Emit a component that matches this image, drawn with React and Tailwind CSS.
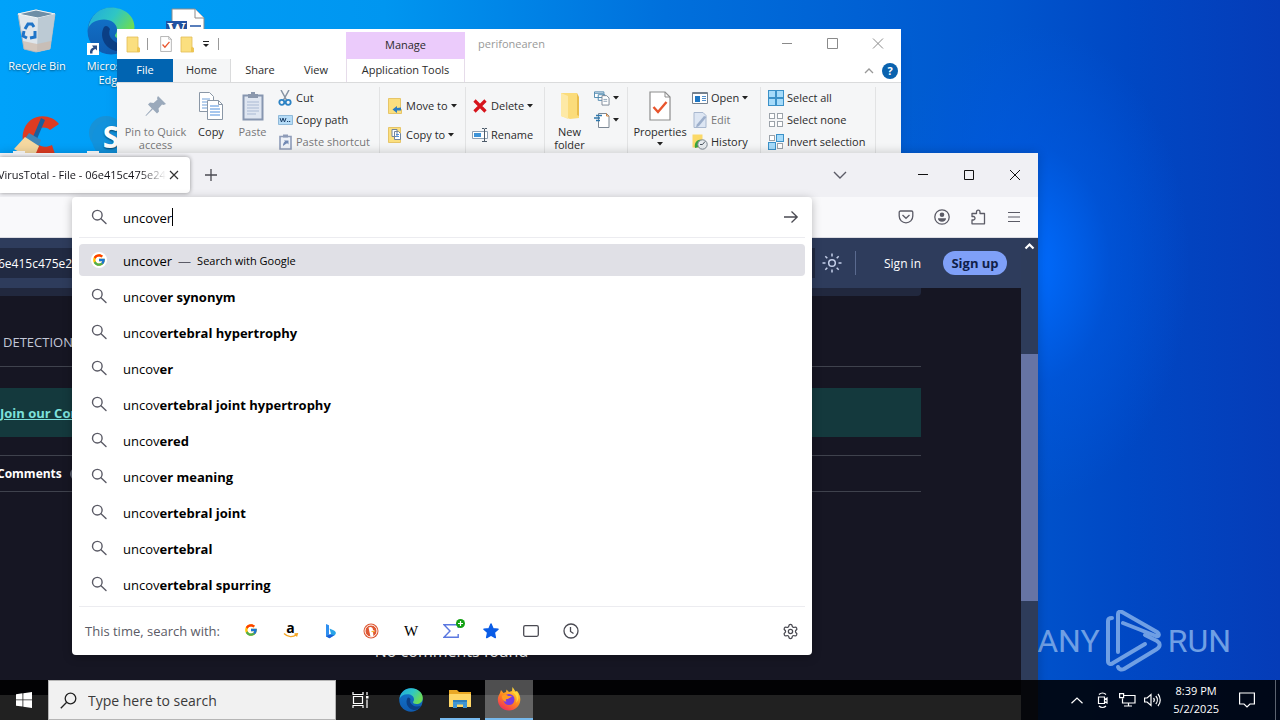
import { FcGoogle } from "react-icons/fc";
import { Settings } from "lucide-react";

const suggestions = [
  ["uncov", "er synonym"],
  ["uncov", "ertebral hypertrophy"],
  ["uncov", "er"],
  ["uncov", "ertebral joint hypertrophy"],
  ["uncov", "ered"],
  ["uncov", "er meaning"],
  ["uncov", "ertebral joint"],
  ["uncov", "ertebral"],
  ["uncov", "ertebral spurring"],
];

/* ---------- ICONS ---------- */

function SearchIcon() {
  return (
    <svg width="16" height="16" viewBox="0 0 16 16" fill="none" stroke="#5b5b66" strokeWidth="1.4" className="shrink-0">
      <circle cx="6.3" cy="6.2" r="4.8" />
      <path d="M10 9.8l5 4.7" strokeLinecap="round" />
    </svg>
  );
}

function FolderIcon() {
  return (
    <svg width="14" height="17" viewBox="0 0 14 17">
      <path d="M1 1h11v10l1.500 1v4H1z" fill="#fbdf7f" stroke="#e3bd55" strokeWidth=".8" />
      <path d="M11 16v-5l2.500 1v4z" fill="#eec54f" />
    </svg>
  );
}

function CheckDoc({ width, height }) {
  return (
    <svg width={width} height={height} viewBox="0 0 22 30" fill="none">
      <path d="M1 1h15l5 5v23H1z" fill="#fff" stroke="#8d8d8d" strokeWidth="1.200" />
      <path d="M16 1v5h5" stroke="#8d8d8d" />
      <path d="M4.500 16l4.500 5 8.500-10" stroke="#e8552d" strokeWidth="2.400" />
    </svg>
  );
}

function Arrow() {
  return (
    <svg width="6" height="4" viewBox="0 0 6 4" className="shrink-0">
      <path d="M0 0h6L3 3.500z" fill="#222" />
    </svg>
  );
}

function PinIcon() {
  return (
    <svg width="24" height="24" viewBox="0 0 24 24" fill="#9aa9bb">
      <path d="M14 2l8 8-2.500 1-1.500-.5-3.500 4 .5 3-2 2-4.200-4.200L2 22l-.5-.5 6.300-7L4 10.500l2-2 3.500.5L13.500 5.500 13 4z" />
    </svg>
  );
}

function CopyIcon() {
  return (
    <svg width="26" height="30" viewBox="0 0 26 30" fill="#fff" stroke="#8a97a6">
      <path d="M1.500 1.500h10l4 4v15h-14z" />
      <path d="M4 8h8M4 11h8M4 14h5M4 17h5" stroke="#6f9fd8" />
      <path d="M9.500 9.500h11l4 4v15h-15z" />
      <path d="M20.500 9.500v4h4" fill="none" />
      <path d="M12 15h9M12 18h10M12 21h10M12 24h10" stroke="#4f8fdc" />
    </svg>
  );
}

function PasteIcon() {
  return (
    <svg width="22" height="30" viewBox="0 0 22 30">
      <path d="M1.500 4.500h19v24h-19z" fill="#dfe6f1" stroke="#8796b0" strokeWidth="2" />
      <path d="M6 3h3V1h4v2h3v4H6z" fill="#8b98ad" />
      <path d="M5 11h12M5 14h12M5 17h12M5 20h12M5 23h9" stroke="#a9b9d3" />
    </svg>
  );
}

function CutIcon() {
  return (
    <svg width="14" height="16" viewBox="0 0 14 16" fill="none">
      <path d="M3 0l5.500 10M11 0L5.500 10" stroke="#8593a3" strokeWidth="1.500" />
      <circle cx="3.800" cy="12.300" r="2.500" stroke="#2d83c4" strokeWidth="1.800" />
      <circle cx="10.200" cy="12.300" r="2.500" stroke="#2d83c4" strokeWidth="1.800" />
    </svg>
  );
}

function CopyPathIcon() {
  return (
    <svg width="15" height="10" viewBox="0 0 15 10">
      <path d="M.5.500h14v9H.5z" fill="#b6dcf7" stroke="#8fb9d9" />
      <path d="M2 3l1.500 4L5 3l1.500 4L8 3M9 6.500h1.200M11 6.500h1.200" stroke="#1c3f68" fill="none" />
    </svg>
  );
}

function PasteShortcutIcon() {
  return (
    <svg width="13" height="16" viewBox="0 0 13 16">
      <path d="M1 2.500h11v12.500H1z" fill="#eef2f8" stroke="#8e9cb8" strokeWidth="1.600" />
      <path d="M4 .5h5v3H4z" fill="#8e9cb8" />
      <path d="M4 12c0-2 .5-3.500 2-4.500L5 6.500h4.500v4L8.300 9.300C6.500 10 5.500 11 4 12z" fill="#7189b4" />
    </svg>
  );
}

function MoveToIcon() {
  return (
    <svg width="14" height="16" viewBox="0 0 14 16">
      <path d="M.5.500h12v10l1 1v4H.5z" fill="#fbdf7f" stroke="#e6c568" />
      <path d="M13 9.500v3H9v2.500L4.500 11.500 9 8v2z" fill="#2c7cc1" />
    </svg>
  );
}

function CopyToIcon() {
  return (
    <svg width="14" height="16" viewBox="0 0 14 16">
      <path d="M.5.500h12v15H.5z" fill="#fbdf7f" stroke="#e6c568" />
      <path d="M4 2.500h5v7H4zM6.500 4.500h4l2 2v6h-6z" fill="#fff" stroke="#72849c" />
      <path d="M8 7.500h3M8 9.500h3" stroke="#4f8fdc" />
    </svg>
  );
}

function DeleteIcon() {
  return (
    <svg width="14" height="14" viewBox="0 0 14 14">
      <path d="M1.500 1.500l11 11M12.500 1.500l-11 11" stroke="#d6141c" strokeWidth="3.200" />
    </svg>
  );
}

function RenameIcon() {
  return (
    <svg width="16" height="14" viewBox="0 0 16 14" fill="none">
      <path d="M.5 3.500h15v7H.5z" fill="#fff" stroke="#8ea0b3" />
      <path d="M2 5h7v4H2z" fill="#3d93d8" />
      <path d="M12.500 1v12M10 .5h2l.5.500.5-.5h2M10 13.500h5" stroke="#4d5b6a" />
    </svg>
  );
}

function NewFolderIcon() {
  return (
    <svg width="20" height="28" viewBox="0 0 20 28">
      <path d="M1 1h16v20l2 1v4l-9 1-9-3z" fill="#fbdc7b" />
      <path d="M1 1l7 3v23l-7-3z" fill="#fde9a6" />
      <path d="M17 1v22l2 1V5z" fill="#e9bd4d" />
    </svg>
  );
}

function NewItemIcon() {
  return (
    <svg width="17" height="16" viewBox="0 0 17 16" fill="#fff">
      <path d="M.5 1.500h10v6H.5zM4.500 4.500h7v6h-7z" stroke="#4c86ad" />
      <path d="M1 3h9" stroke="#4c86ad" />
      <path d="M8.500 5.500h5l2.500 2.500v7.500H8.500z" stroke="#7c8895" />
      <path d="M10 9.500h4M10 11.500h4" stroke="#8fa2b5" />
    </svg>
  );
}

function EasyAccessIcon() {
  return (
    <svg width="16" height="16" viewBox="0 0 16 16" fill="none">
      <path d="M4.500 1.500h8l2.500 2.500v11.500H4.500z" fill="#fff" stroke="#7c8895" />
      <path d="M12.500 1.500V4H15" stroke="#d58338" />
      <path d="M2 3.500h6M0 6h6M2 8.500h4" stroke="#2e77ac" strokeWidth="1.300" />
    </svg>
  );
}

function OpenIcon() {
  return (
    <svg width="16" height="12" viewBox="0 0 16 12">
      <path d="M.5.500h15v11H.5z" fill="#fff" stroke="#75818e" />
      <path d="M1 1.500h14" stroke="#75818e" />
      <path d="M3 4h5v6H3z" fill="#1f77c4" />
      <path d="M10 4.500h4M10 6.500h4M10 8.500h4" stroke="#4f8fcc" />
    </svg>
  );
}

function EditIcon() {
  return (
    <svg width="14" height="16" viewBox="0 0 14 16">
      <path d="M1 .5h9l3 3v12H1z" fill="#dde6f3" stroke="#a9b8cf" />
      <path d="M13.500 5L6 14l-3 1.500.8-3L11 4z" fill="#9dafcb" />
    </svg>
  );
}

function HistoryIcon() {
  return (
    <svg width="16" height="16" viewBox="0 0 16 16" fill="none">
      <path d="M.5.500h10v13H.5z" fill="#fbd968" />
      <path d="M3 14c-1-5 2-9 6-8l-1 3c-3 0-2 3-1 4z" fill="#38a53c" />
      <circle cx="10.500" cy="10.500" r="4.700" fill="#e7ebee" stroke="#7a858f" />
      <path d="M10.500 10.500l2.500-3M10.500 10.500H8" stroke="#4c5660" />
    </svg>
  );
}

function TilesIcon({ fills }) {
  const spots = [[0.5, 0.5], [8.5, 0.5], [0.5, 8.5], [8.5, 8.5]];
  return (
    <svg width="16" height="16" viewBox="0 0 16 16">
      {spots.map(([x, y], i) => (
        <rect
          key={i}
          x={fills[i] ? x : x + 1}
          y={fills[i] ? y : y + 1}
          width={fills[i] ? 7 : 5}
          height={fills[i] ? 7 : 5}
          fill={fills[i] ? "#a6dbfa" : "#fff"}
          stroke={fills[i] ? "#3b91c8" : "#9ba2a9"}
        />
      ))}
    </svg>
  );
}

function EdgeIcon({ size, id }) {
  return (
    <svg width={size} height={size} viewBox="0 0 48 48" className="shrink-0">
      <defs>
        <linearGradient id={id + "a"} x1="0" y1="0" x2="1" y2=".5">
          <stop offset="0" stopColor="#1fa8e0" />
          <stop offset=".55" stopColor="#2fc6c4" />
          <stop offset="1" stopColor="#6bdc56" />
        </linearGradient>
        <linearGradient id={id + "b"} x1="0" y1="0" x2="0" y2="1">
          <stop offset="0" stopColor="#1276cc" />
          <stop offset="1" stopColor="#0f5bb0" />
        </linearGradient>
      </defs>
      <circle cx="24" cy="24" r="23.500" fill={"url(#" + id + "b)"} />
      <path d="M1 22C3 8 13 .5 24 .5c14 0 23.500 9 23.500 19.500 0 8-6 12-12.500 12-5 0-7-2-7-3.500s2-2 2-6c0-6-6-10-13-10C9 12.500 3 16 1 22z" fill={"url(#" + id + "a)"} />
      <path d="M17 20c-5 9 0 21 12 24 6 1 13-3 16-9-5 3-13 3-18-1-4-3-6-7-4-12-2-3-4-4-6-2z" fill="#0b3f85" />
    </svg>
  );
}

function FirefoxIcon() {
  return (
    <svg width="24" height="24" viewBox="0 0 24 24">
      <defs>
        <linearGradient id="fx" x1=".8" y1="0" x2=".2" y2="1">
          <stop offset="0" stopColor="#ffe43d" />
          <stop offset=".5" stopColor="#ff8a1e" />
          <stop offset="1" stopColor="#f2265e" />
        </linearGradient>
      </defs>
      <path d="M3 6l1-3 2.500 3L9 5l.5-2.500L12 5l3-1 .5-4 3 4.500L20 4c2.500 3 3.500 6 3.300 9C23 19 18 23.500 12 23.500S.8 19 .8 12.500C.8 10 2 8 3 6z" fill="url(#fx)" />
      <circle cx="12" cy="12.500" r="5.500" fill="#7a3be0" />
      <path d="M5 9c2-2 5-1 6 0h4c-1 2-3 1.500-4 3-2-.5-3 1-1.500 2.500C7 15 4.500 12 5 9z" fill="#ff9a22" />
      <path d="M15 5c4 2 6 6 4 11 3-3 3-7 1-11z" fill="#ffd93b" />
    </svg>
  );
}

function FileExplorerIcon() {
  return (
    <svg width="22" height="20" viewBox="0 0 22 20">
      <path d="M0 1h8l2 2h12v15H0z" fill="#e9a825" />
      <path d="M0 5h22v13H0z" fill="#ffd766" />
      <path d="M4 19v-8h14v8h-4v-3.500H8V19z" fill="#3f95d3" />
      <path d="M4 11h14v2H4z" fill="#2d7dba" />
    </svg>
  );
}

function ShortcutBadge() {
  return (
    <svg width="12" height="12" viewBox="0 0 12 12" className="absolute bottom-0 left-0">
      <path d="M0 0h12v12H0z" fill="#fff" />
      <path d="M3 10.500C2.500 7 4 5 6.500 4.500L5 2.500h5v5L8.500 6C6.500 6.500 5 8 5.500 10.500z" fill="#2c4d86" />
    </svg>
  );
}

function RecycleBinIcon() {
  return (
    <svg width="40" height="44" viewBox="0 0 40 44">
      <path d="M1 5L19 1l19 4-5 35-14 3-12-3z" fill="#dfe6ec" stroke="#a9b6c0" />
      <path d="M1 5l20 4 17-4L19 1z" fill="#6e8ea6" stroke="#f2f6f8" />
      <path d="M21 9l-1 34 13-3 5-35z" fill="#bccad4" />
      <path d="M6 32l14 3 14-3-1 8-13 3-13-3z" fill="#cdb9ab" opacity=".7" />
      <g fill="none" stroke="#1f74c8" strokeWidth="3">
        <path d="M8 20l3-5h4l2 3M18 22l0 6-5 1M10 29l-4-2 1-5" />
      </g>
    </svg>
  );
}

function CCleanerIcon() {
  return (
    <svg width="48" height="48" viewBox="0 0 48 48">
      <path d="M46 9C37-3 14-2 10 18c-3 16 12 28 32 21l-3-9c-8 4-17 1-17-8 0-9 9-12 15-7z" fill="#dd3b22" />
      <path d="M28 3l4 2-8 19-4-2z" fill="#1a5f9d" />
      <path d="M16 18l12 7-3 8-14-8z" fill="#3f86b8" />
      <path d="M12 22l14 9-6 14L1 34z" fill="#f5d8a0" />
    </svg>
  );
}

function SkypeIcon() {
  return (
    <svg width="48" height="48" viewBox="0 0 48 48">
      <circle cx="19" cy="18" r="17" fill="#1692d8" />
      <circle cx="29" cy="30" r="17" fill="#0a7cc6" />
      <circle cx="24" cy="24" r="19" fill="#1292dc" />
      <text x="24" y="33" textAnchor="middle" fill="#fff" fontSize="30" fontWeight="700" fontFamily="Open Sans, sans-serif">S</text>
    </svg>
  );
}

function WordDocIcon() {
  return (
    <svg width="40" height="48" viewBox="0 0 40 48">
      <path d="M7 2h23l9 9v36H7z" fill="#fff" stroke="#8b8b8b" />
      <path d="M30 2v9h9" fill="#fff" stroke="#8b8b8b" />
      <path d="M1 14h21v20H1z" fill="#2354a5" />
      <path d="M25 19h11M25 23h11" stroke="#2354a5" strokeWidth="1.500" />
      <text x="11.500" y="29" textAnchor="middle" fill="#fff" fontSize="19" fontWeight="700" fontFamily="Liberation Serif, serif">W</text>
    </svg>
  );
}

/* ---------- DESKTOP ---------- */

function DesktopItem({ icon, label = [], shortcut }) {
  return (
    <div className="flex w-[74px] flex-col items-center gap-1 text-center text-[11px] leading-[14px] text-white [text-shadow:0_1px_2px_#0008]">
      <div className="relative flex h-12 w-12 items-center justify-center">
        {icon}
        {shortcut && <ShortcutBadge />}
      </div>
      <span className="flex flex-col items-center whitespace-nowrap">
        {label.map((l) => <span key={l}>{l}</span>)}
      </span>
    </div>
  );
}

function Watermark() {
  return (
    <div className="absolute right-[49px] bottom-[47px] flex items-center gap-[6px] font-['Roboto',sans-serif] text-[32px] leading-[64px] text-[#6f9fe4]">
      <span>ANY</span>
      <svg width="56" height="62" viewBox="0 0 56 62" fill="none" stroke="#6f9fe4" strokeWidth="4" strokeLinejoin="round" strokeLinecap="round">
        <path d="M6 8c-3 0-4 1-4 3v40c0 3 3 4 5 2l32-19" />
        <path d="M12 42V4c0-2 2-3 4-2l35 20c3 2 2 5-1 4L17 13" />
        <path d="M12 57c1 3 4 3 6 2l33-20c4-3 3-6 0-8l-12-6" />
      </svg>
      <span>RUN</span>
    </div>
  );
}

/* ---------- FILE EXPLORER ---------- */

function BigButton({ icon, lines, muted, arrow, width }) {
  return (
    <button className={"flex flex-col items-center leading-[13px] " + width + (muted ? " text-[#777]" : "")}>
      <span className="flex h-[38px] items-center">{icon}</span>
      {lines.map((l) => <span key={l} className="whitespace-nowrap">{l}</span>)}
      {arrow && <span className="mt-1"><Arrow /></span>}
    </button>
  );
}

function SmallButton({ icon, label, muted, arrow }) {
  return (
    <button className={"flex h-[22px] items-center gap-[3px] whitespace-nowrap " + (muted ? "text-[#777]" : "")}>
      <span className="flex w-4 justify-center">{icon}</span>
      {label}
      {arrow && <Arrow />}
    </button>
  );
}

function Explorer() {
  return (
    <section className="absolute top-[29px] right-[379px] left-[117px] h-48 bg-white text-[11px] text-[#2b2b2b] shadow-lg">
      <header className="flex border-b border-[#dadbdc]">
        <div className="w-[229px]">
          <div className="flex h-[30px] items-center pl-[9px]">
            <FolderIcon />
            <i className="ml-[7px] h-3 w-px bg-[#999]" />
            <span className="ml-3"><CheckDoc width="12" height="16" /></span>
            <span className="ml-2"><FolderIcon /></span>
            <svg width="8" height="7" viewBox="0 0 8 7" className="ml-2"><path d="M1 .5h6" stroke="#222" /><path d="M1 3h6L4 6z" fill="#222" /></svg>
            <i className="ml-2 h-3 w-px bg-[#999]" />
          </div>
          <nav className="flex h-[23px]">
            <button className="w-14 bg-[#0164b1] text-white">File</button>
            <button className="w-[58px] border-r border-[#dadbdc] bg-[#f5f6f7]">Home</button>
            <button className="w-[58px]">Share</button>
            <button className="w-[54px]">View</button>
          </nav>
        </div>
        <div className="flex w-[119px] flex-col pt-[3px]">
          <div className="flex h-[27px] items-center justify-center bg-[#ebcbfb]">Manage</div>
          <button className="h-[23px] border-x border-[#e6dcea] whitespace-nowrap">Application Tools</button>
        </div>
        <div className="flex flex-1 flex-col">
          <div className="flex h-[30px] items-center justify-between pr-[17px] pl-[13px] text-[#999]">
            <span>perifonearen</span>
            <svg width="102" height="12" viewBox="0 0 102 12" fill="none" stroke="#8a8a8a">
              <path d="M0 5.500h10M45.500.500h10v10h-10zM91 .5l10 10M101 .5l-10 10" />
            </svg>
          </div>
          <div className="flex h-[23px] items-center justify-end gap-2 pr-[3px]">
            <svg width="10" height="6" viewBox="0 0 10 6" fill="none" stroke="#999" strokeWidth="1.300"><path d="M1 5l4-4 4 4" /></svg>
            <button className="h-4 w-4 rounded-full bg-[#0a62ae] text-[11px] leading-4 font-bold text-white">?</button>
          </div>
        </div>
      </header>

      <div className="flex h-[140px] bg-[#f5f6f7] pt-1">
        <div className="flex w-[263px] shrink-0 border-r border-[#e2e3e4]">
          <BigButton icon={<PinIcon />} lines={["Pin to Quick", "access"]} muted width="w-[77px]" />
          <BigButton icon={<CopyIcon />} lines={["Copy"]} width="w-[34px]" />
          <BigButton icon={<PasteIcon />} lines={["Paste"]} muted width="w-[49px]" />
          <div>
            <SmallButton icon={<CutIcon />} label="Cut" />
            <SmallButton icon={<CopyPathIcon />} label="Copy path" />
            <SmallButton icon={<PasteShortcutIcon />} label="Paste shortcut" muted />
          </div>
        </div>
        <div className="flex w-[86px] shrink-0 flex-col gap-[7px] border-r border-[#e2e3e4] pt-2 pl-[7px]">
          <SmallButton icon={<MoveToIcon />} label="Move to" arrow />
          <SmallButton icon={<CopyToIcon />} label="Copy to" arrow />
        </div>
        <div className="flex w-[79px] shrink-0 flex-col gap-[7px] border-r border-[#e2e3e4] pt-2 pl-[6px]">
          <SmallButton icon={<DeleteIcon />} label="Delete" arrow />
          <SmallButton icon={<RenameIcon />} label="Rename" />
        </div>
        <div className="flex w-[83px] shrink-0 border-r border-[#e2e3e4]">
          <BigButton icon={<NewFolderIcon />} lines={["New", "folder"]} width="w-[49px]" />
          <div>
            <SmallButton icon={<NewItemIcon />} arrow />
            <SmallButton icon={<EasyAccessIcon />} arrow />
          </div>
        </div>
        <div className="flex w-[133px] shrink-0 border-r border-[#e2e3e4]">
          <BigButton icon={<CheckDoc width="22" height="30" />} lines={["Properties"]} arrow width="w-16" />
          <div>
            <SmallButton icon={<OpenIcon />} label="Open" arrow />
            <SmallButton icon={<EditIcon />} label="Edit" muted />
            <SmallButton icon={<HistoryIcon />} label="History" />
          </div>
        </div>
        <div className="w-[115px] shrink-0 border-r border-[#e2e3e4] pl-[7px]">
          <SmallButton icon={<TilesIcon fills={[1, 1, 1, 1]} />} label="Select all" />
          <SmallButton icon={<TilesIcon fills={[0, 0, 0, 0]} />} label="Select none" />
          <SmallButton icon={<TilesIcon fills={[0, 1, 1, 0]} />} label="Invert selection" />
        </div>
      </div>
    </section>
  );
}

/* ---------- BROWSER ---------- */

function SearchEngines() {
  return (
    <div className="flex">
      <button aria-label="Google" className="flex w-10 justify-center"><FcGoogle size={14} /></button>
      <button aria-label="Amazon" className="flex w-10 justify-center">
        <svg width="16" height="16" viewBox="0 0 16 16">
          <text x="7.500" y="10" textAnchor="middle" fontSize="14" fontWeight="700" fontFamily="Open Sans, sans-serif">a</text>
          <path d="M1 10.500c4 4 9 4 12.500 1M11.500 11l2.800-.3-.8 2.800" fill="none" stroke="#f5a623" strokeWidth="1.400" />
        </svg>
      </button>
      <button aria-label="Bing" className="flex w-10 justify-center">
        <svg width="16" height="16" viewBox="0 0 16 16">
          <path d="M3 1l3 1.200v9.300L3 14z" fill="#2f8ff0" />
          <path d="M6.500 5.500L11 7.500c2 1 2.500 3 1 4.500L6.500 15.200 3 13.500l5-2.800z" fill="#28a4e8" />
          <path d="M3 13.200l3-1.700 5.500.5-5 3.200z" fill="#1b5fd8" />
        </svg>
      </button>
      <button aria-label="DuckDuckGo" className="flex w-10 justify-center">
        <svg width="16" height="16" viewBox="0 0 16 16">
          <circle cx="8" cy="8" r="7.500" fill="#de5833" />
          <circle cx="8" cy="8" r="6" fill="none" stroke="#fff" />
          <path d="M5.500 4.500C8 3 10 4.500 10 7l2 1-2 1 .5 4.500-3 .3z" fill="#fff" />
          <path d="M8.500 8.500h3" stroke="#f5b82e" strokeWidth="1.200" />
        </svg>
      </button>
      <button aria-label="Wikipedia" className="w-10 font-['Liberation_Serif',serif] text-[15px] leading-4 text-black">W</button>
      <button aria-label="VirusTotal" className="relative flex w-10 justify-center">
        <svg width="16" height="16" viewBox="0 0 16 16" fill="none" stroke="#5b78e0" strokeWidth="1.400">
          <path d="M15.200 5V1.800H1L7 8l-6 6.200h14.200V11" />
        </svg>
        <svg width="9" height="9" viewBox="0 0 9 9" className="absolute -top-1 right-[6px]">
          <circle cx="4.500" cy="4.500" r="4.500" fill="#12a112" />
          <path d="M4.500 2v5M2 4.500h5" stroke="#fff" strokeWidth="1.200" />
        </svg>
      </button>
      <button aria-label="Bookmarks" className="flex w-10 justify-center">
        <svg width="16" height="16" viewBox="0 0 16 16" fill="#0a5ce6" stroke="#0a5ce6" strokeWidth="1.500" strokeLinejoin="round">
          <path d="M8 1l2 4.700 5 .5-3.700 3.300 1 5L8 12l-4.300 2.500 1-5L1 6.200l5-.5z" />
        </svg>
      </button>
      <button aria-label="Tabs" className="flex w-10 justify-center">
        <svg width="16" height="16" viewBox="0 0 16 16" fill="none" stroke="#4a4a52" strokeWidth="1.300"><rect x=".7" y="2.700" width="14.600" height="10.600" rx="1.500" /></svg>
      </button>
      <button aria-label="History" className="flex w-10 justify-center">
        <svg width="16" height="16" viewBox="0 0 16 16" fill="none" stroke="#4a4a52" strokeWidth="1.300"><circle cx="8" cy="8" r="7" /><path d="M7.500 4v4.500l3 2" /></svg>
      </button>
    </div>
  );
}

function UrlBar() {
  return (
    <div className="absolute top-11 right-[226px] left-[72px] rounded bg-white px-[7px] text-[13px] text-black shadow-[0_2px_10px_#0004]">
      <label className="flex h-[41px] items-center border-b border-[#ececf0] px-3">
        <SearchIcon />
        <input
          type="text"
          aria-label="Search or enter address"
          defaultValue="uncover"
          className="ml-4 field-sizing-content pt-[3px] outline-none"
        />
        <span className="h-[18px] w-px bg-black" />
        <svg width="16" height="16" viewBox="0 0 16 16" fill="none" stroke="#4a4a52" strokeWidth="1.300" className="ml-auto mr-[-6px]">
          <path d="M1 8h13M8.500 2.500L14.200 8l-5.700 5.500" />
        </svg>
      </label>
      <ul className="py-1">
        <li className="flex h-9 items-center">
          <a href="#" className="flex h-8 w-full items-center rounded bg-[#e0e0e6] px-3">
            <span className="flex h-4 w-4 items-center justify-center rounded-full bg-white"><FcGoogle size={14} /></span>
            <span className="ml-4 pt-[3px]">uncover</span>
            <span className="ml-[6px] pt-[3px] text-[#5b5b66]">—</span>
            <span className="ml-[6px] pt-[3px] text-[11px]">Search with Google</span>
          </a>
        </li>
        {suggestions.map(([start, rest]) => (
          <li key={rest}>
            <a href="#" className="flex h-9 items-center px-3">
              <SearchIcon />
              <span className="ml-4 pt-[3px]">{start}<b>{rest}</b></span>
            </a>
          </li>
        ))}
      </ul>
      <div className="flex h-[49px] items-center border-t border-[#ececf0] px-[6px]">
        <span className="mr-[11px] pt-[2px] text-[#5b5b66] whitespace-nowrap">This time, search with:</span>
        <SearchEngines />
        <button aria-label="Search settings" className="ml-auto"><Settings size={17} strokeWidth={1.800} color="#4a4a52" /></button>
      </div>
    </div>
  );
}

function VirusTotalPage() {
  return (
    <div className="flex flex-1 bg-[#161623] text-white">
      <div className="flex min-w-0 flex-1 flex-col overflow-hidden">
        <header className="flex h-[50px] items-center bg-[#2e3c5c] text-[12px]">
          <div className="flex h-[30px] flex-1 items-center bg-[#212a42] pt-[2px]">
            <span className="-ml-[2px]">6e415c475e2</span>
          </div>
          <svg width="20" height="20" viewBox="0 0 20 20" fill="none" stroke="#c5d0ea" strokeWidth="1.500" className="ml-[7px]">
            <circle cx="10" cy="10" r="3.300" />
            <path d="M10 .5v3M10 16.500v3M.5 10h3M16.500 10h3M3.300 3.300l2 2M14.700 14.700l2 2M3.300 16.700l2-2M14.700 5.300l2-2" />
          </svg>
          <i className="ml-[13px] h-6 w-px bg-[#5a6a8f]" />
          <a href="#" className="ml-7 pt-[2px] whitespace-nowrap">Sign in</a>
          <button className="mr-[14px] ml-[22px] h-6 w-16 rounded-full bg-[#7fa0f8] text-[13px] leading-6 font-bold text-[#10204a]">Sign up</button>
        </header>
        <main className="mr-[100px] flex-1">
          <div className="h-2 rounded-br bg-[#21283e]" />
          <div className="flex h-[71px] items-center border-b border-[#3f424d] pt-[23px] pl-[3px] text-[13px] text-[#c3c8d8]">DETECTION</div>
          <div className="mt-[21px] flex h-[49px] items-center bg-[#14393d] pt-[2px] text-[13px] font-bold text-[#7de0dc]">
            <a href="#" className="whitespace-nowrap underline">Join our Community</a>
          </div>
          <div className="mt-[18px] flex h-[37px] items-center border-y border-[#3f424d] text-[12px] font-bold">
            <span className="-ml-[3px]">Comments</span>
            <span className="ml-2 h-3 w-4 rounded-full bg-[#5a6070]" />
          </div>
          <p className="mt-[149px] pr-[18px] text-center text-[16px] leading-5">No comments found</p>
        </main>
        <footer className="h-[25px] shrink-0 bg-white" />
      </div>
      <div className="flex w-[17px] flex-col bg-[#2e3c5a]">
        <svg width="17" height="17" viewBox="0 0 17 17" fill="none" stroke="#fff" strokeWidth="2.200"><path d="M4.500 10.500l4-4 4 4" /></svg>
        <div className="mt-[99px] h-[247px] bg-[#6674a4]" />
      </div>
    </div>
  );
}

function Browser() {
  return (
    <section className="absolute top-[153px] right-[242px] bottom-0 left-0 flex flex-col shadow-[0_0_10px_#0003]">
      <div className="flex h-11 shrink-0 items-center bg-[#f0f0f4] text-[11px] text-[#15141a]">
        <div className="flex h-9 w-[190px] items-center rounded-r bg-white shadow-[0_0_4px_#0006]">
          <span className="w-[166px] overflow-hidden whitespace-nowrap [mask-image:linear-gradient(to_right,black_84%,transparent)]">
            <span className="-ml-[2px]">VirusTotal - File - 06e415c475e24</span>
          </span>
          <button aria-label="Close tab">
            <svg width="16" height="16" viewBox="0 0 16 16" stroke="#333" strokeWidth="1.200"><path d="M4 4l8 8M12 4l-8 8" /></svg>
          </button>
        </div>
        <button aria-label="New tab" className="ml-[13px]">
          <svg width="16" height="16" viewBox="0 0 16 16" stroke="#4a4a52" strokeWidth="1.300"><path d="M8 2v12M2 8h12" /></svg>
        </button>
        <svg width="14" height="8" viewBox="0 0 14 8" fill="none" stroke="#5b5b66" strokeWidth="1.400" className="ml-auto"><path d="M1 1l6 6 6-6" /></svg>
        <svg width="102" height="12" viewBox="0 0 102 12" fill="none" stroke="#111" className="mr-[18px] ml-[71px]">
          <path d="M0 5.500h10M46.500 1.500h9v9h-9zM92 1l10 10M102 1L92 11" />
        </svg>
      </div>
      <div className="flex h-[41px] shrink-0 items-center justify-end gap-5 border-b border-[#dcdce2] bg-[#f9f9fb] pr-4">
        <svg width="16" height="16" viewBox="0 0 16 16" fill="none" stroke="#5b5b66" strokeWidth="1.300">
          <path d="M2.500 2h11c.8 0 1.300.5 1.300 1.300V7c0 4-3 6.800-6.800 6.800S1.200 11 1.200 7V3.300C1.200 2.500 1.700 2 2.500 2z" />
          <path d="M4.500 6L8 9.300 11.500 6" />
        </svg>
        <svg width="16" height="16" viewBox="0 0 16 16" fill="none" stroke="#5b5b66" strokeWidth="1.300">
          <circle cx="8" cy="8" r="7.200" />
          <circle cx="8" cy="5.700" r="2.300" fill="#5b5b66" stroke="none" />
          <path d="M4 9.300h8c0 2-1.500 3.500-4 3.500S4 11.300 4 9.300z" fill="#5b5b66" stroke="none" />
        </svg>
        <svg width="16" height="16" viewBox="0 0 16 16" fill="none" stroke="#5b5b66" strokeWidth="1.300">
          <path d="M2 6V4.500h4.500V3c0-2.600 3.500-2.600 3.500 0v1.500h4.500v10.300H2V11h1.500c2 0 2-3.500 0-3.500H2z" strokeLinejoin="round" />
        </svg>
        <svg width="12" height="12" viewBox="0 0 12 12" stroke="#5b5b66" strokeWidth="1.200" className="mx-[2px]"><path d="M0 1.500h12M0 6h12M0 10.500h12" /></svg>
      </div>
      <VirusTotalPage />
      <UrlBar />
    </section>
  );
}

/* ---------- TASKBAR ---------- */

function Taskbar() {
  return (
    <footer className="absolute inset-x-0 bottom-0 flex h-10 items-stretch bg-black/87 text-white">
      <button aria-label="Start" className="flex w-12 items-center justify-center">
        <svg width="16" height="16" viewBox="0 0 16 16" fill="#fff">
          <path d="M0 2.200l6.500-.9v6.200H0zM7.300 1.200L16 0v7.500H7.300zM0 8.300h6.500v6.200L0 13.700zM7.300 8.300H16V16l-8.700-1.200z" />
        </svg>
      </button>
      <label className="flex w-72 items-center gap-[11px] border border-[#b5b5b5] bg-[#f1f1f1] px-[11px]">
        <svg width="17" height="17" viewBox="0 0 17 17" fill="none" stroke="#222" strokeWidth="1.300"><circle cx="10.500" cy="6.500" r="5.300" /><path d="M6.700 10.300L.8 16.200" /></svg>
        <input type="text" aria-label="Search" placeholder="Type here to search" className="min-w-0 flex-1 text-[14px] outline-none placeholder:text-[#3a3a3a]" />
      </label>
      <div className="flex gap-px">
        <button aria-label="Task view" className="mr-[2px] flex w-12 items-center justify-center">
          <svg width="17" height="16" viewBox="0 0 17 16" fill="none" stroke="#fff" strokeWidth="1.200">
            <path d="M1 0v2.500h10V0M1.500 4.500h9v7h-9zM1 16v-2.500h10V16M15 0v3M15 7.500V16" />
            <path d="M14 4h2.500v2.500H14z" fill="#fff" stroke="none" />
          </svg>
        </button>
        <button aria-label="Edge" className="flex w-12 items-center justify-center"><EdgeIcon size={24} id="tb" /></button>
        <button aria-label="File Explorer" className="mx-1 flex w-10 items-center justify-center border-b-2 border-[#76b9ed]"><FileExplorerIcon /></button>
        <button aria-label="Firefox" className="flex w-12 items-center justify-center border-b-2 border-[#76b9ed] bg-white/30"><FirefoxIcon /></button>
      </div>
      <div className="ml-auto flex items-center gap-2 text-[11px] leading-[18px]">
        <svg width="12" height="7" viewBox="0 0 12 7" fill="none" stroke="#fff" strokeWidth="1.200"><path d="M.5 6.300L6 1l5.500 5.300" /></svg>
        <svg width="16" height="16" viewBox="0 0 16 16" fill="none" stroke="#fff" strokeWidth="1.200" className="ml-1">
          <path d="M3.500 5h6v6.500h-6zM9.500 7.500L12 6v5L9.500 9.500M4 2.500C6 .7 9 .7 11 2.500M4 14c2 1.800 5 1.800 7 0" />
        </svg>
        <svg width="17" height="14" viewBox="0 0 17 14" fill="none" stroke="#fff" strokeWidth="1.200">
          <path d="M5 2.500h11v7.500H3.500V5.500M.6.600h4v4h-4zM5 13h8M9.500 10v3" />
        </svg>
        <svg width="17" height="14" viewBox="0 0 17 14" fill="none" stroke="#fff" strokeWidth="1.200">
          <path d="M.6 5h2.500L7 1.500v11L3.100 9H.6zM9.500 5c1 1.200 1 2.800 0 4M11.800 3c2 2.300 2 5.700 0 8M14 1c3 3.500 3 8.500 0 12" />
        </svg>
        <div className="ml-1 flex flex-col items-center whitespace-nowrap">
          <span>8:39 PM</span>
          <span>5/2/2025</span>
        </div>
        <svg width="16" height="16" viewBox="0 0 16 16" fill="none" stroke="#fff" strokeWidth="1.200" className="ml-3"><path d="M.6 1h14.800v11H11l-3 3-3-3H.6z" /></svg>
        <i className="mr-1 ml-3 h-10 w-px bg-[#5c6370]" />
      </div>
    </footer>
  );
}

export default function App() {
  return (
    <div className="relative h-screen overflow-hidden bg-[radial-gradient(ellipse_160px_240px_at_1030px_265px,#006cff_0,#005ae480_50%,transparent_100%),linear-gradient(to_right,#00a2fa_0%,#0096f0_30%,#0070dc_52%,#0056ce_78%,#0048c4_88%,#053cb8_100%)] font-['Open_Sans','Noto_Sans',sans-serif]">
      <div className="absolute top-[7px] left-0 grid grid-cols-3 gap-y-7">
        <DesktopItem icon={<RecycleBinIcon />} label={["Recycle Bin"]} />
        <DesktopItem icon={<EdgeIcon size={48} id="dt" />} label={["Microsoft", "Edge"]} shortcut />
        <DesktopItem icon={<WordDocIcon />} />
        <DesktopItem icon={<CCleanerIcon />} shortcut />
        <DesktopItem icon={<SkypeIcon />} shortcut />
      </div>
      <Explorer />
      <Watermark />
      <Browser />
      <Taskbar />
    </div>
  );
}
